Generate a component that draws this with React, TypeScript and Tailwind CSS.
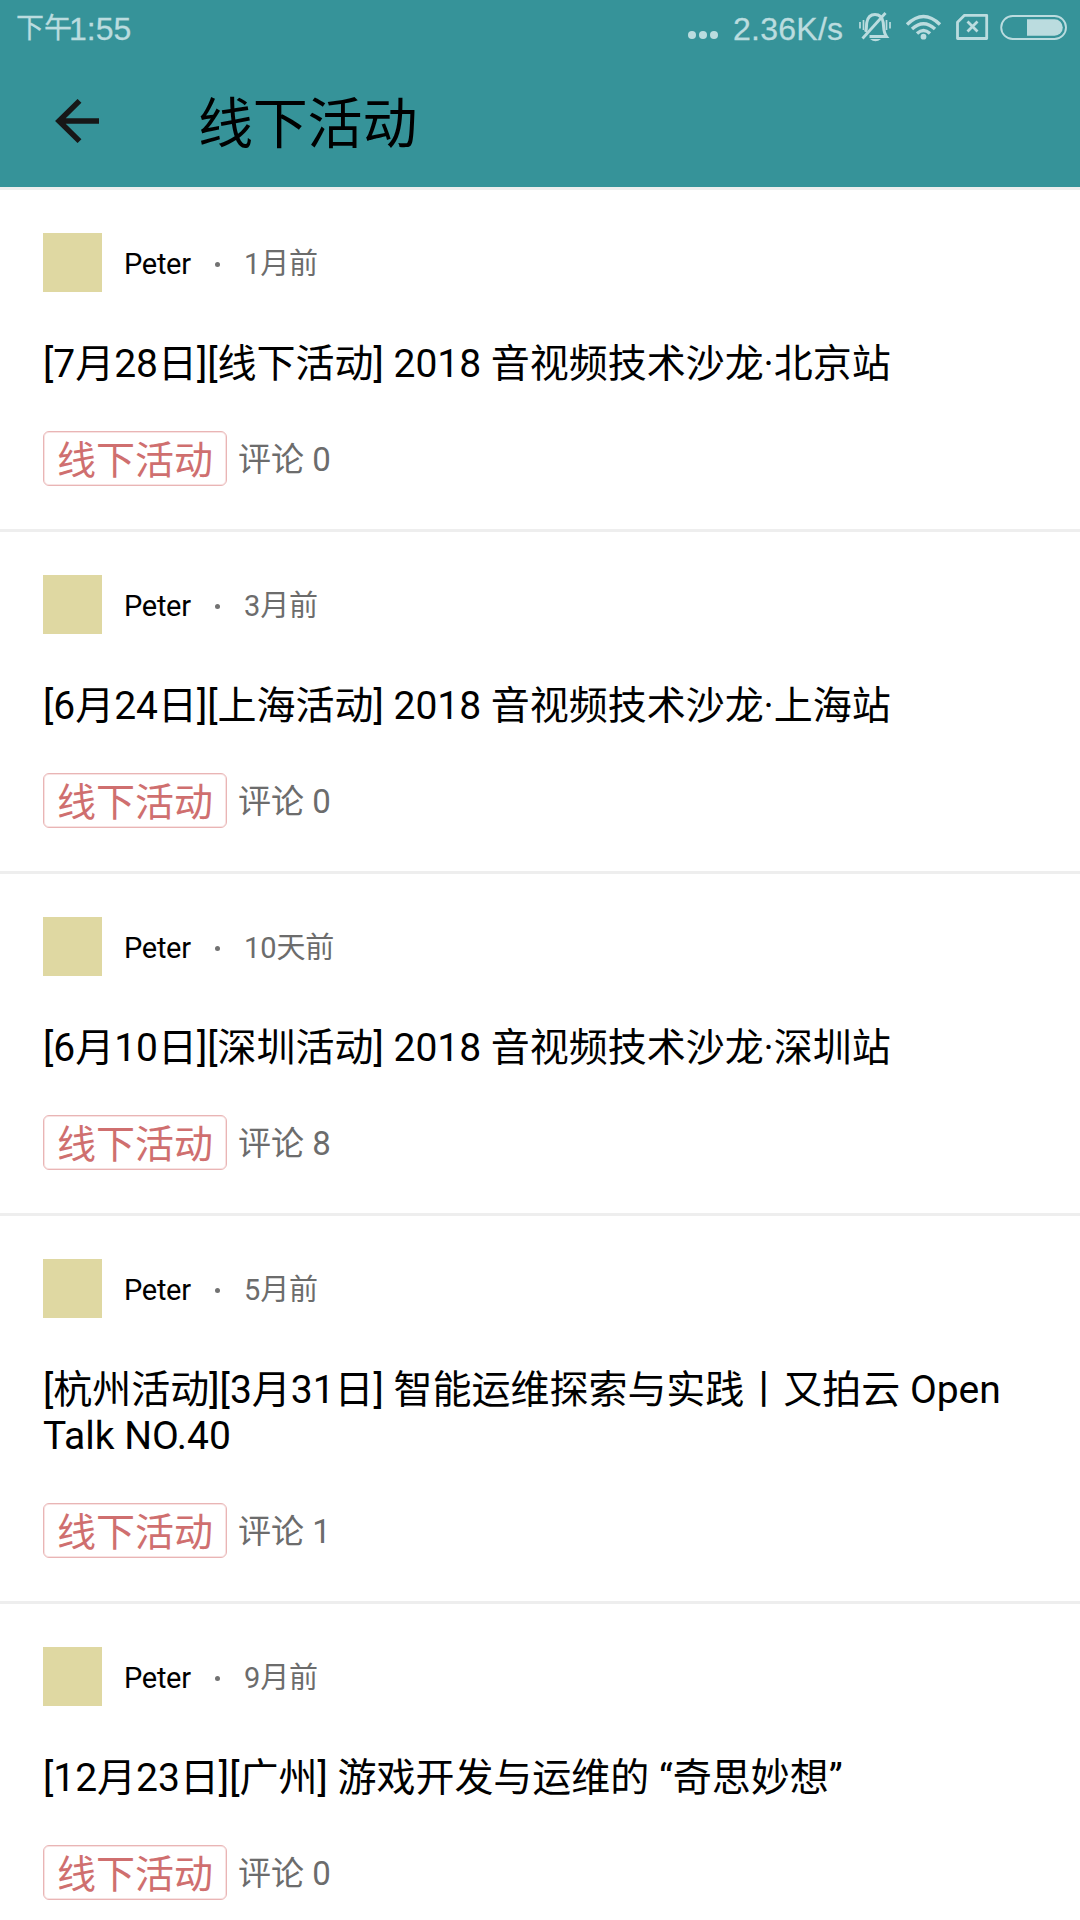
const items = [
  { time: '1月前', title: '[7月28日][线下活动] 2018 音视频技术沙龙·北京站', comments: 0 },
  { time: '3月前', title: '[6月24日][上海活动] 2018 音视频技术沙龙·上海站', comments: 0 },
  { time: '10天前', title: '[6月10日][深圳活动] 2018 音视频技术沙龙·深圳站', comments: 8 },
  { time: '5月前', title: '[杭州活动][3月31日] 智能运维探索与实践丨又拍云 Open Talk NO.40', comments: 1 },
  { time: '9月前', title: '[12月23日][广州] 游戏开发与运维的 “奇思妙想”', comments: 0 },
];

function StatusIcons() {
  return (
    <svg width="230" height="60" viewBox="180 0 230 60" fill="none" stroke="#bbdcdf">
      <path d="M195.500 32c1.500-3 .7-6.500 1.300-9.500c1-5.500 4-8 8.200-8s7.300 2.500 8.200 8c.7 4.500-.2 9 3.300 14h-17" strokeWidth="3" />
      <path d="M192.500 38.500L215.500 13" strokeWidth="2.800" />
      <path d="M200 39h11q-5.500 4.500-11 0z" fill="#bbdcdf" stroke="none" />
      <path d="M190 22v6.500M193.500 20v10M216.500 20v10M220 22v6.500" strokeWidth="1.700" />
      <g strokeWidth="3.400">
        <path d="M237 24.500q16.500-16 33 0" />
        <path d="M242 29q11.500-10.500 23 0" />
        <path d="M247 33.500q6.500-6 13 0" />
      </g>
      <circle cx="253.500" cy="36.700" r="2.900" fill="#bbdcdf" stroke="none" />
      <path d="M294.500 15.300h22.200v23.200h-29.200v-16.200z" strokeWidth="2.800" strokeLinejoin="round" />
      <path d="M297.500 21.500l10 10M307.500 21.500l-10 10" strokeWidth="2.800" />
      <rect x="331.200" y="16" width="64.800" height="23" rx="11.500" strokeWidth="1.900" />
      <path d="M357 19.200h27.500a8.300 8.300 0 0 1 0 16.600h-27.500z" fill="#bbdcdf" stroke="none" />
    </svg>
  );
}

function StatusBar() {
  return (
    <div className="flex h-[60px] items-start pl-4 font-['Liberation_Sans','Noto_Sans_CJK_SC',sans-serif] text-[32px] leading-[36px] text-[#bbdcdf] [-webkit-text-stroke:0.3px_#bbdcdf]">
      <div className="flex pt-[11px]">
        <span className="text-[28px]">下午</span>
        <span className="-ml-[3px]">1:55</span>
      </div>
      <div className="ml-auto flex gap-[3px] pt-[31px] pr-[15px]">
        <i className="size-2 rounded-full bg-[#bbdcdf]" />
        <i className="size-2 rounded-full bg-[#bbdcdf]" />
        <i className="size-2 rounded-full bg-[#bbdcdf]" />
      </div>
      <span className="w-[117px] pt-[11px] tracking-[0.25px]">2.36K/s</span>
      <StatusIcons />
    </div>
  );
}

export default function App() {
  return (
    <div className="h-[1920px] w-[1080px] overflow-hidden bg-white font-[Roboto,'Noto_Sans_CJK_SC',sans-serif] text-black">
      <header className="h-[190px] border-b-3 border-[#eeeeee] bg-[#369399]">
        <StatusBar />
        <div className="flex h-[127px] items-center pl-[55px]">
          <svg width="44" height="44" viewBox="0 0 44 44" className="mb-[5px]" fill="none" stroke="#171717" strokeWidth="5.500">
            <path d="M44 22H5M24.500 1.900L4 22l20.500 20.100" />
          </svg>
          <h1 className="ml-[99px] text-[55px] leading-[64px] tracking-[-0.2px]">线下活动</h1>
        </div>
      </header>
      <main>
        {items.map((item) => (
          <article key={item.title} className="border-b-3 border-[#eeeeee] px-[43px] pt-[43px] pb-[43px]">
            <div className="flex h-[59px] items-center text-[29px] leading-[36px]">
              <div className="size-[59px] bg-[#dfd8a2]" />
              <span className="ml-[22px] w-[67px] pt-[3px] tracking-[-0.3px]">Peter</span>
              <span className="mt-1 ml-[24px] size-[5px] rounded-full bg-[#727272]" />
              <span className="ml-[24px] pt-[2px] tracking-[-0.1px] text-[#6c6c6c]">{item.time}</span>
            </div>
            <h2 className="mt-[49px] text-[39px] leading-[46px] tracking-[-0.02px]">{item.title}</h2>
            <div className="mt-[44px] flex h-[55px] items-center">
              <span className="flex h-[55px] w-[184px] items-center justify-center rounded-[6px] border border-[#e9b5b5] pt-[5px] text-[39px] text-[#cf6f6f] shadow-[inset_0_0_0_1px_#f8e3e3]">线下活动</span>
              <span className="ml-[11px] pt-[2px] text-[33px] text-[#6c6c6c]">评论 {item.comments}</span>
            </div>
          </article>
        ))}
      </main>
    </div>
  );
}
